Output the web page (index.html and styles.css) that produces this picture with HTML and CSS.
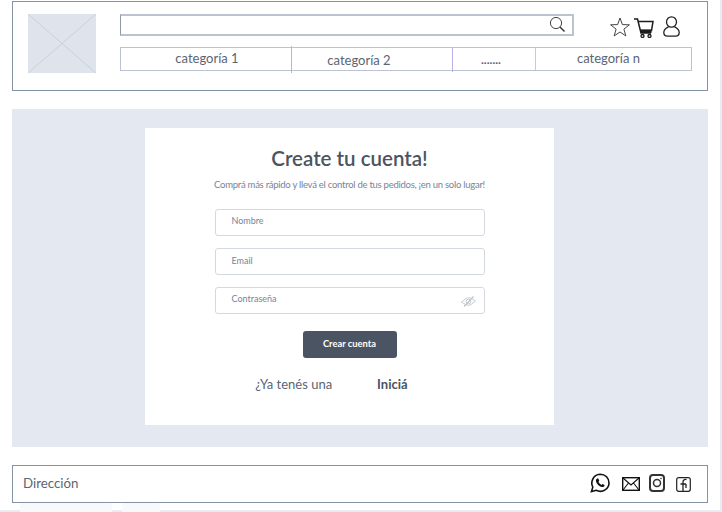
FILE: index.html
```html
<!doctype html>
<html>
<head>
  <title>Create tu cuenta</title>
  <link rel="stylesheet" href="styles.css">
</head>
<body>
<div class="page">
	<header class="site-header">
		<div class="logo">
			<svg viewBox="0 0 68 59" preserveAspectRatio="none">
				<path d="M0 0L68 59M68 0L0 59" stroke="#c9d0dc" stroke-width="1" fill="none"/>
			</svg>
		</div>
		<div class="header-main">
			<div class="header-top">
				<div class="search">
					<svg class="search-icon" width="17" height="17" viewBox="0 0 17 17">
						<circle cx="7" cy="7" r="5.6" fill="none" stroke="#444" stroke-width="1"/>
						<path d="M11 11L15.5 15.5" stroke="#333" stroke-width="1.4" fill="none"/>
					</svg>
				</div>
				<div class="header-icons">
					<svg class="icon-star" width="20" height="20" viewBox="0 0 20 20">
						<path d="M10 1L12.4 7.6L19.4 7.8L13.9 12.1L15.8 18.9L10 15L4.2 18.9L6.1 12.1L0.6 7.8L7.6 7.6Z" fill="none" stroke="#444" stroke-width="1"/>
					</svg>
					<svg class="icon-cart" width="20" height="20" viewBox="0 0 20 20">
						<path d="M0 1H3.500L7 15H17" fill="none" stroke="#1c1c1c" stroke-width="1.500"/>
						<path d="M4 3.500H19L17.500 12.500H6.500" fill="none" stroke="#1c1c1c" stroke-width="1.500"/>
						<path d="M6 11.500H17.500V15H6.500Z" fill="#1c1c1c"/>
						<circle cx="8.500" cy="18" r="1.500" fill="none" stroke="#1c1c1c" stroke-width="1.300"/>
						<circle cx="15.500" cy="18" r="1.500" fill="none" stroke="#1c1c1c" stroke-width="1.300"/>
					</svg>
					<svg class="icon-user" width="17" height="21" viewBox="0 0 17 21">
						<ellipse cx="8.500" cy="6" rx="5" ry="5.200" fill="none" stroke="#222" stroke-width="1.300"/>
						<path d="M5.500 10.800C2.800 12 0.800 14 0.800 16.500C0.800 19 2.500 20.200 4.500 20.200H12.500C14.500 20.200 16.200 19 16.200 16.500C16.200 14 14.200 12 11.500 10.800" fill="none" stroke="#222" stroke-width="1.300"/>
					</svg>
				</div>
			</div>
			<nav class="categories">
				<a class="cat cat-1">categoría 1</a>
				<a class="cat cat-2">categoría 2</a>
				<a class="cat cat-3">.......</a>
				<a class="cat cat-4">categoría n</a>
			</nav>
		</div>
	</header>

	<main class="content">
		<form class="card">
			<h1>Create tu cuenta!</h1>
			<p class="subtitle">Comprá más rápido y llevá el control de tus pedidos, ¡en un solo lugar!</p>
			<div class="field">Nombre</div>
			<div class="field field-email">Email</div>
			<div class="field field-password">
				Contraseña
				<svg class="eye" width="15" height="11" viewBox="0 0 15 11">
					<path d="M0.500 6L5 2.500C7 1.500 9 1.500 10.500 2.500L14.500 5L10 8.500C8 9.500 6 9.500 4.500 8.500Z" fill="none" stroke="#c6ccd5" stroke-width="1"/>
					<circle cx="7.500" cy="5.500" r="2.300" fill="none" stroke="#c6ccd5" stroke-width="1"/>
					<path d="M3 10.500L12.500 0.500" stroke="#bcc3cd" stroke-width="1.200"/>
				</svg>
			</div>
			<button class="submit" type="button">Crear cuenta</button>
			<div class="login-row">
				<span>¿Ya tenés una</span>
				<strong>Iniciá</strong>
			</div>
		</form>
	</main>

	<footer class="site-footer">
		<span class="address">Dirección</span>
		<div class="social">
			<svg width="20" height="20" viewBox="0 0 20 20">
				<path d="M1.500 18.500L2.800 14.200C0.300 9.500 2.800 1.500 10 1.200C15.500 1.200 19 5.200 19 10C19 15.500 13 20.500 6 17.300Z" fill="none" stroke="#111" stroke-width="1.600"/>
				<path d="M7 5.500C5.500 6.500 5.500 8.500 7 10.500C8.500 12.700 11 14.500 13 14C14.300 13.700 14.800 12.500 14.500 12L12.500 11L11.500 12C10 11.300 9 10 8.500 8.800L9.300 7.700L8.300 5.500Z" fill="#111"/>
			</svg>
			<svg class="mail" width="18" height="14" viewBox="0 0 18 14">
				<rect x="0.700" y="0.700" width="16.600" height="12.600" fill="none" stroke="#111" stroke-width="1.400"/>
				<path d="M1 1L9 8L17 1M1 13L6.500 6M17 13L11.500 6" fill="none" stroke="#111" stroke-width="1.100"/>
			</svg>
			<svg class="insta" width="16" height="18" viewBox="0 0 16 18">
				<rect x="1" y="1" width="14" height="16" rx="3" fill="none" stroke="#333" stroke-width="2"/>
				<circle cx="8" cy="9" r="3.500" fill="none" stroke="#333" stroke-width="1.500"/>
				<circle cx="12" cy="4.500" r="0.800" fill="#333"/>
			</svg>
			<svg class="fb" width="15" height="15" viewBox="0 0 15 15">
				<rect x="0.700" y="0.700" width="13.600" height="13.600" rx="2" fill="none" stroke="#222" stroke-width="1.200"/>
				<path d="M10.500 2.500C8.200 2 7 3.300 7 5V14M4.500 7H10M10 7V11" fill="none" stroke="#222" stroke-width="1.300"/>
			</svg>
		</div>
	</footer>

	<div class="bottom-tabs">
		<span class="tab tab-wide"></span>
		<span class="tab tab-narrow"></span>
	</div>
</div>
</body>
</html>
```

FILE: styles.css
```css
*,
*:before,
*:after {
	box-sizing: border-box;
}

html,
body {
	height: 100%;
}

body {
	margin: 0;
	overflow: hidden;
	background-color: #e8ebf2;
	font-family: "Lato", sans-serif;
	color: #4a5462;
}

.page {
	width: 720px;
	height: 512px;
	padding: 1px 12px 0;
	background-color: #fff;
}

/* header */

.site-header {
	display: flex;
	height: 90px;
	padding: 12px 15px 0 15px;
	border: 1px solid #8493a5;
}

.logo {
	width: 68px;
	height: 59px;
	margin-right: 24px;
	background-color: #dfe4ec;
}

.logo svg {
	display: block;
	width: 100%;
	height: 100%;
}

.header-main {
	flex: 1;
}

.header-top {
	display: flex;
	height: 33px;
}

.search {
	display: flex;
	align-items: center;
	justify-content: flex-end;
	width: 454px;
	height: 22px;
	padding: 0 6px 2px 0;
	border: 1px solid #8e99aa;
	border-top: 2px solid #bcc3d0;
	border-bottom: 2px solid #bcc3d0;
	border-right: 2px solid #bcc3d0;
}

.header-icons {
	display: flex;
	align-items: flex-start;
	margin-left: 36px;
}

.icon-star {
	margin: 3px 4px 0 0;
}

.icon-cart {
	margin: 4px 9px 0 0;
}

.icon-user {
	margin-top: 2px;
}

.categories {
	display: flex;
	height: 24px;
	border: 1px solid #bcc3d4;
	font-size: 13px;
	color: #5b6573;
}

.cat {
	display: block;
	text-align: center;
	line-height: 20px;
}

.cat-1 {
	width: 170px;
	padding-left: 2px;
}

.cat-2 {
	width: 161px;
	height: 27px;
	margin-top: -2px;
	padding: 2px 26px 0 0;
	border-left: 1px solid #b9b1ec;
	line-height: 24px;
}

.cat-3 {
	width: 83px;
	height: 25px;
	margin-top: -1px;
	padding: 1px 6px 0 0;
	border-left: 1px solid #b9b1ec;
	font-size: 12px;
	font-weight: 700;
	line-height: 24px;
}

.cat-4 {
	flex: 1;
	padding-right: 10px;
	border-left: 1px solid #c9c3f0;
}

/* form */

.content {
	display: flex;
	justify-content: center;
	height: 338px;
	margin-top: 18px;
	padding-top: 19px;
	background-color: #e4e8f1;
}

.card {
	display: flex;
	flex-direction: column;
	align-items: center;
	width: 409px;
	height: 297px;
	margin-right: 21px;
	padding-top: 16px;
	background-color: #fff;
}

h1 {
	margin: 0;
	font-size: 20.5px;
	line-height: 28px;
	font-weight: 600;
	color: #4a5462;
}

.subtitle {
	margin: 6px 0 0;
	font-size: 9.5px;
	line-height: 14px;
	letter-spacing: -0.26px;
	color: #76849a;
}

.field {
	position: relative;
	width: 270px;
	height: 27px;
	margin-top: 12px;
	padding-left: 16px;
	border: 1px solid #d4d9e1;
	border-radius: 3px;
	font-size: 9px;
	line-height: 22px;
	color: #76849a;
}

.subtitle + .field {
	margin-top: 17px;
}

.field-email {
	line-height: 24px;
}

.eye {
	position: absolute;
	right: 8px;
	top: 8px;
}

.submit {
	width: 94px;
	height: 27px;
	margin-top: 17px;
	padding: 0 0 3px;
	border: none;
	border-radius: 3px;
	background-color: #4a5462;
	font-family: inherit;
	font-size: 9.400px;
	font-weight: 700;
	color: #fff;
}

.login-row {
	display: flex;
	gap: 45px;
	margin: 17px 36px 0 0;
	font-size: 13px;
	line-height: 18px;
	color: #5b6573;
}

.login-row strong {
	color: #4a5462;
}

/* footer */

.site-footer {
	display: flex;
	align-items: center;
	justify-content: space-between;
	height: 38px;
	margin-top: 18px;
	padding: 0 16px 2px 10px;
	border: 1px solid #8493a5;
}

.address {
	font-size: 13.300px;
	color: #5b6573;
}

.social {
	display: flex;
	align-items: center;
}

.mail {
	margin: 2px 9px 0 12px;
}

.insta {
	margin-right: 11px;
}

.fb {
	margin-top: 2px;
}

.bottom-tabs {
	display: flex;
	gap: 10px;
	height: 9px;
	margin: 0 -12px;
	padding-left: 20px;
	border-bottom: 2px solid #e8ebf2;
}

.tab {
	display: block;
	height: 9px;
	border-radius: 2px 2px 0 0;
	background-color: #f8f9fb;
}

.tab-wide {
	width: 92px;
}

.tab-narrow {
	width: 38px;
}
```
